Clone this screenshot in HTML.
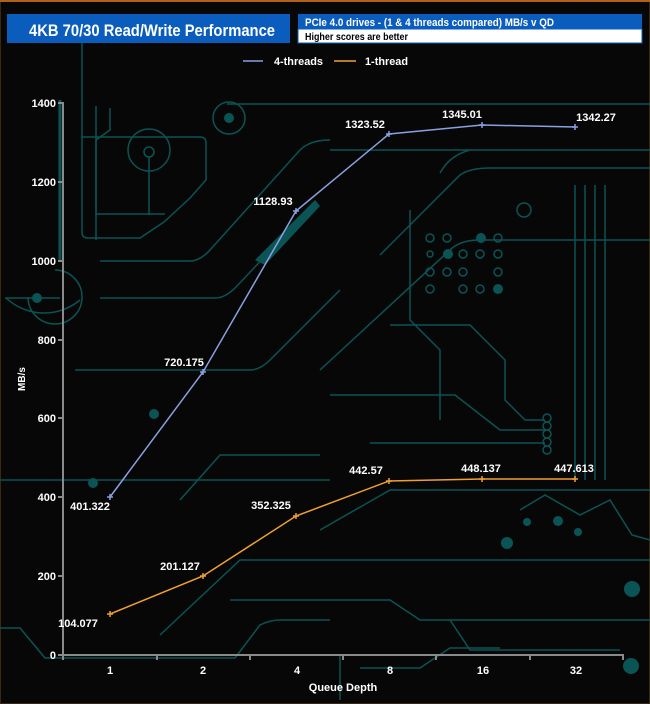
<!DOCTYPE html>
<html><head><meta charset="utf-8"><style>
html,body{margin:0;padding:0;background:#050505;}
svg{display:block}
text{font-family:"Liberation Sans",sans-serif;font-weight:bold;}
</style></head><body>
<svg width="650" height="704" viewBox="0 0 650 704" xmlns="http://www.w3.org/2000/svg">
<rect width="650" height="704" fill="#070707"/>
<rect x="0.5" y="0.5" width="649" height="703" fill="none" stroke="#3a2810" stroke-width="1"/>
<line x1="0" y1="1" x2="650" y2="1" stroke="#b0601a" stroke-width="2"/>
<g fill="none" stroke="#0b5455" stroke-width="1.5">
<path d="M82 137 H200 Q206 137 206 143 V180 L190 198 L164 222 L140 238 H88 Q82 238 82 232 V30"/>
<path d="M96 106 V135 L96 240"/>
<path d="M110 108 V130 L96 140 V214 H165"/>
<circle cx="149" cy="150" r="21"/><circle cx="149" cy="152" r="5"/>
<path d="M149 157 V215"/>
<path d="M227 104 H650"/>
<circle cx="229" cy="118" r="16"/>
<path d="M100 261 H190 Q200 261 210 250 L300 150 Q310 140 330 140"/>
<path d="M100 298 H215 Q225 298 235 288 L290 230"/>
<path d="M5 298 H60"/>
<path d="M60 260 V100" stroke-width="3"/>
<path d="M55 270 A27 27 0 1 1 28 297"/>
<path d="M6 298 A56 56 0 0 0 80 300"/>
<path d="M75 370 H250 Q260 370 270 360 L340 290"/>
<path d="M330 150 H650" />
<path d="M440 173 Q450 155 470 150"/>
<path d="M320 370 L450 250 Q460 240 480 240 H650"/>
<path d="M380 255 L460 175 Q470 168 490 168 H650"/>
<path d="M575 185 V480"/><path d="M585 185 V480"/><path d="M595 185 V480"/><path d="M605 185 V480"/>
<path d="M410 210 V320 L440 350 V420"/>
<circle cx="524" cy="210" r="7"/>
<path d="M390 325 H470 L505 360 V400 L525 420 H545"/>
<path d="M330 395 H455 L500 430 H545"/>
<path d="M370 443 H545"/>
<circle cx="547" cy="418" r="4"/><circle cx="547" cy="426" r="4"/><circle cx="547" cy="434" r="4"/><circle cx="547" cy="442" r="4"/><circle cx="547" cy="450" r="4"/>
<circle cx="430" cy="238" r="4"/><circle cx="447" cy="238" r="4"/><circle cx="498" cy="238" r="4"/><circle cx="430" cy="254" r="3"/><circle cx="463" cy="254" r="4"/><circle cx="480" cy="254" r="4"/><circle cx="498" cy="254" r="4"/><circle cx="430" cy="272" r="4"/><circle cx="447" cy="272" r="4"/><circle cx="463" cy="272" r="4"/><circle cx="498" cy="272" r="4"/><circle cx="430" cy="289" r="4"/><circle cx="463" cy="289" r="4"/><circle cx="480" cy="289" r="4"/>
<path d="M0 628 H20 L45 658 H235 L260 625 Q270 620 280 620 H330"/>
<path d="M0 480 H330"/>
<path d="M180 500 L220 455 H320"/>
<path d="M320 530 L390 490 H650"/>
<path d="M160 635 L240 560 H650"/>
<path d="M230 600 H390 L420 620 H650"/>
<path d="M450 620 L470 650 H620"/>
<path d="M520 510 L545 495 L580 515 L610 500 L632 535 L650 540"/>
<path d="M360 668 H420 L450 648 H500"/>
<path d="M340 655 V700"/>
</g>
<g fill="#0b5455">
<circle cx="229" cy="118" r="5"/><circle cx="37" cy="298" r="5"/><circle cx="93" cy="483" r="5"/><circle cx="154" cy="414" r="5"/>
<circle cx="481" cy="238" r="5"/><circle cx="448" cy="254" r="5"/><circle cx="498" cy="289" r="5"/>
<circle cx="507" cy="543" r="6"/><circle cx="527" cy="522" r="4"/><circle cx="558" cy="521" r="5"/><circle cx="578" cy="532" r="4"/><circle cx="632" cy="589" r="8"/><circle cx="631" cy="666" r="8"/>
<path d="M255 260 L315 200 L320 206 L265 265Z"/>
</g>
<rect x="7" y="14" width="283" height="29" fill="#0a5cbd"/>
<text x="29" y="36" font-size="17" fill="#fff" textLength="246" lengthAdjust="spacingAndGlyphs">4KB 70/30 Read/Write Performance</text>
<rect x="298" y="14" width="344" height="15" fill="#0a5cbd"/>
<rect x="298" y="29" width="344" height="14" fill="#fff" stroke="#0a5cbd" stroke-width="1"/>
<text x="305" y="26" font-size="11" fill="#fff" font-weight="normal" textLength="249" lengthAdjust="spacingAndGlyphs">PCIe 4.0 drives - (1 &amp; 4 threads compared) MB/s v QD</text>
<text x="305" y="40" font-size="10.5" fill="#000" font-weight="normal" textLength="103" lengthAdjust="spacingAndGlyphs">Higher scores are better</text>
<line x1="243" y1="61" x2="263" y2="61" stroke="#8aa0e0" stroke-width="1.5"/>
<text x="274" y="65" font-size="11" fill="#fff" font-weight="normal" textLength="49" lengthAdjust="spacingAndGlyphs">4-threads</text>
<line x1="334" y1="61" x2="356" y2="61" stroke="#f0a030" stroke-width="1.5"/>
<text x="365" y="65" font-size="11" fill="#fff" font-weight="normal" textLength="43" lengthAdjust="spacingAndGlyphs">1-thread</text>
<g stroke="#8a8a8a" stroke-width="2">
<line x1="63" y1="102" x2="63" y2="660"/>
<line x1="58" y1="655" x2="624" y2="655"/>
<line x1="58" y1="103" x2="63" y2="103"/><line x1="58" y1="182" x2="63" y2="182"/><line x1="58" y1="261" x2="63" y2="261"/><line x1="58" y1="340" x2="63" y2="340"/><line x1="58" y1="418" x2="63" y2="418"/><line x1="58" y1="497" x2="63" y2="497"/><line x1="58" y1="576" x2="63" y2="576"/>
<line x1="157" y1="655" x2="157" y2="660"/><line x1="250" y1="655" x2="250" y2="660"/><line x1="343" y1="655" x2="343" y2="660"/><line x1="436" y1="655" x2="436" y2="660"/><line x1="530" y1="655" x2="530" y2="660"/><line x1="623" y1="655" x2="623" y2="660"/>
</g>
<g font-size="11" fill="#fff" text-anchor="end">
<text x="56" y="107">1400</text><text x="56" y="186">1200</text><text x="56" y="265">1000</text><text x="56" y="344">800</text><text x="56" y="422">600</text><text x="56" y="501">400</text><text x="56" y="580">200</text><text x="56" y="659">0</text>
</g>
<g font-size="11" fill="#fff" text-anchor="middle">
<text x="110" y="674">1</text><text x="203" y="674">2</text><text x="297" y="674">4</text><text x="390" y="674">8</text><text x="483" y="674">16</text><text x="576" y="674">32</text>
<text x="343" y="691">Queue Depth</text>
</g>
<text transform="translate(25,379) rotate(-90)" font-size="10" fill="#fff" text-anchor="middle">MB/s</text>
<polyline points="110,497 203,372 296,211 389,134 482,125 575,127" fill="none" stroke="#8aa0e0" stroke-width="1.5"/>
<polyline points="110,614 203,576 296,516 389,481 482,479 575,479" fill="none" stroke="#f0a030" stroke-width="1.5"/>
<g stroke="#8aa0e0" stroke-width="1.5"><path d="M107 497h6M110 494v6M200 372h6M203 369v6M293 211h6M296 208v6M386 134h6M389 131v6M479 125h6M482 122v6M572 127h6M575 124v6"/></g>
<g stroke="#f0a030" stroke-width="1.5"><path d="M107 614h6M110 611v6M200 576h6M203 573v6M293 516h6M296 513v6M386 481h6M389 478v6M479 479h6M482 476v6M572 479h6M575 476v6"/></g>
<g font-size="11" fill="#fff" text-anchor="middle">
<text x="90" y="510">401.322</text><text x="184" y="366">720.175</text><text x="273" y="205">1128.93</text><text x="365" y="128">1323.52</text><text x="462" y="118">1345.01</text><text x="596" y="121">1342.27</text>
<text x="78" y="627">104.077</text><text x="180" y="570">201.127</text><text x="271" y="509">352.325</text><text x="366" y="474">442.57</text><text x="481" y="472">448.137</text><text x="574" y="472">447.613</text>
</g>
</svg>
</body></html>
